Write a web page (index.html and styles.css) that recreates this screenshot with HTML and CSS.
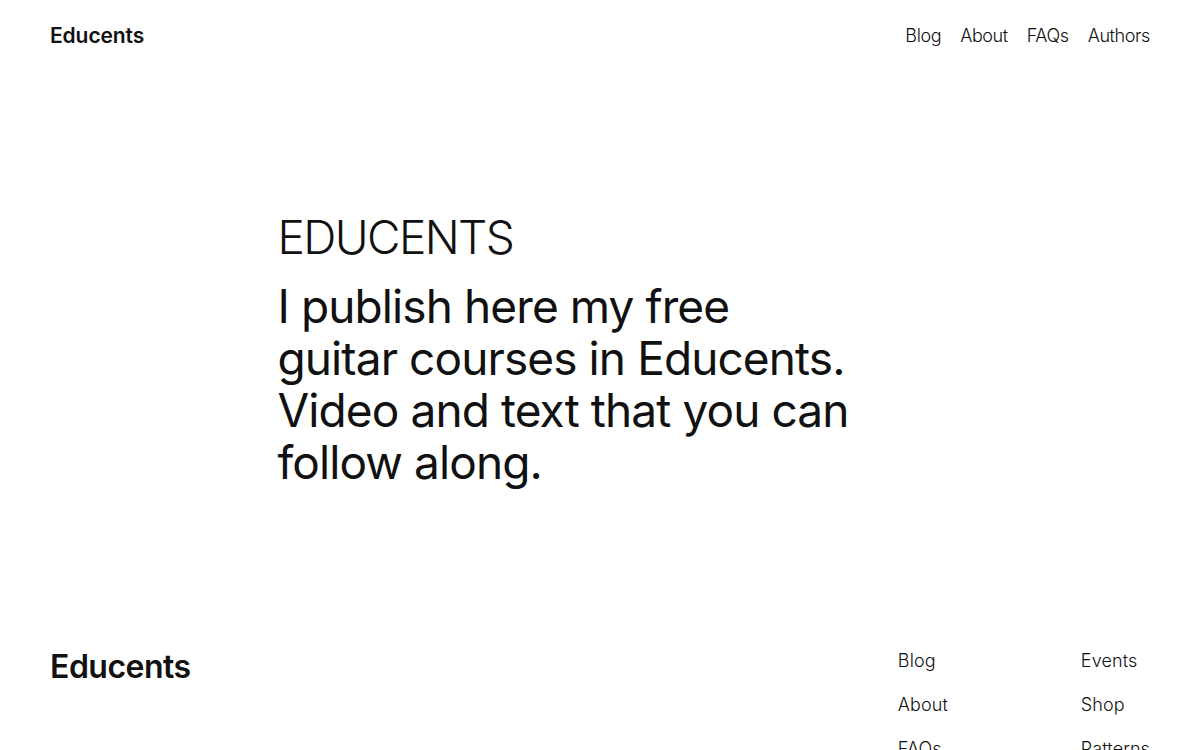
FILE: index.html
```html
<!DOCTYPE html>
<html lang="en">
<head>
<meta charset="utf-8">
<title>Educents</title>
<link rel="stylesheet" href="styles.css">
</head>
<body>
<header class="site-header">
  <a class="site-title" href="#">Educents</a>
  <nav class="main-nav">
    <a href="#">Blog</a>
    <a href="#">About</a>
    <a href="#">FAQs</a>
    <a href="#">Authors</a>
  </nav>
</header>
<main class="hero">
  <div class="hero-inner">
    <h1 class="hero-title">EDUCENTS</h1>
    <p class="hero-text">I publish here my free<br>guitar courses in Educents. Video and text that you can follow along.</p>
  </div>
</main>
<footer class="site-footer">
  <a class="footer-title" href="#">Educents</a>
  <div class="footer-nav">
    <ul class="footer-col">
      <li><a href="#">Blog</a></li>
      <li><a href="#">About</a></li>
      <li><a href="#">FAQs</a></li>
      <li><a href="#">Authors</a></li>
    </ul>
    <ul class="footer-col">
      <li><a href="#">Events</a></li>
      <li><a href="#">Shop</a></li>
      <li><a href="#">Patterns</a></li>
      <li><a href="#">Themes</a></li>
    </ul>
  </div>
</footer>
</body>
</html>
```
FILE: styles.css
```css
* { box-sizing: border-box; }
html, body {
  margin: 0;
  padding: 0;
  background: #ffffff;
  color: #111111;
  font-family: Inter, "Noto Sans", sans-serif;
}
a { color: #111111; text-decoration: none; }

.site-header {
  display: flex;
  justify-content: space-between;
  align-items: center;
  height: 70px;
  padding: 0 50px;
}
.site-title {
  font-size: 21px;
  font-weight: 600;
  letter-spacing: -0.1px;
}
.main-nav {
  display: flex;
  gap: 19px;
  font-size: 18px;
  font-weight: 300;
  letter-spacing: -0.4px;
}

.hero {
  display: flex;
  justify-content: center;
  padding: 140px 0 151px;
}
.hero-inner {
  width: 645px;
}
.hero-title {
  margin: 0;
  font-size: 46px;
  font-weight: 300;
  line-height: 1.2;
  letter-spacing: -1.6px;
}
.hero-text {
  margin: 15px 0 0;
  font-size: 46px;
  font-weight: 400;
  line-height: 52px;
  letter-spacing: -0.9px;
  width: 590px;
}

.site-footer {
  display: flex;
  justify-content: space-between;
  align-items: flex-start;
  padding: 0 50px;
}
.footer-title {
  font-size: 32px;
  font-weight: 600;
  letter-spacing: -0.5px;
  margin-top: 8px;
}
.footer-nav {
  display: flex;
  gap: 0;
}
.footer-col {
  list-style: none;
  margin: 0;
  padding: 0;
  width: 183px;
  font-size: 18px;
  font-weight: 300;
  letter-spacing: 0.1px;
}
.footer-col:last-child { width: auto; }
.footer-col li {
  height: 44px;
  line-height: 44px;
}
```
